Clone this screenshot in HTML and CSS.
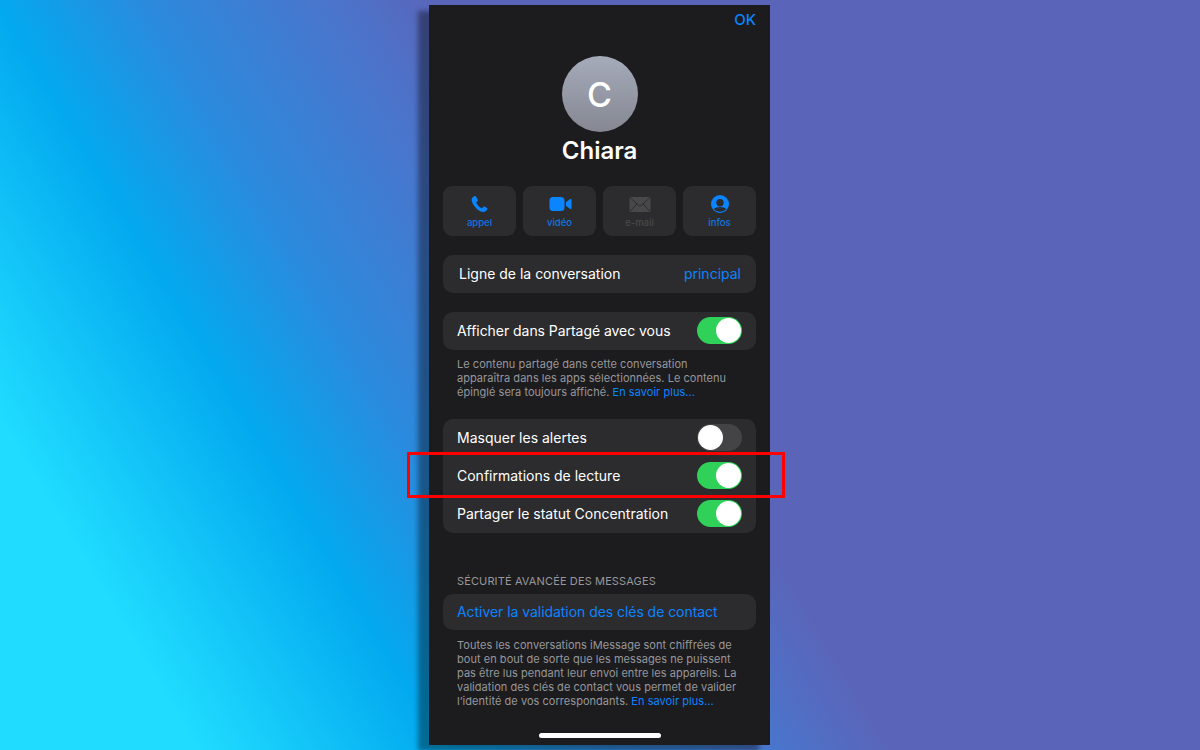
FILE: index.html
```html
<!DOCTYPE html>
<html lang="fr">
<head>
    <meta charset="UTF-8">
    <meta name="viewport" content="width=device-width, initial-scale=1.0">
    <title>Chiara</title>
    <link rel="stylesheet" href="styles.css">
</head>
<body>
    <main class="phone">
        <div class="top-bar"><span class="ok">OK</span></div>

        <section class="contact">
            <div class="avatar">C</div>
            <h1 class="contact-name">Chiara</h1>
        </section>

        <div class="actions">
            <div class="action">
                <svg class="action-icon" viewBox="0 0 24 20" width="24" height="20">
                    <path fill="#0a84ff" transform="translate(3.5 1)" d="M2.6.3C3.300-.1 4.100 0 4.600.7L6.200 3.400C6.600 4 6.500 4.700 6 5.200L5.100 6C4.800 6.300 4.800 6.600 4.900 6.900 5.400 8 6.100 9 7 10 8 10.900 9 11.600 10 12.100 10.300 12.200 10.600 12.200 10.900 11.900L11.700 11C12.200 10.500 12.900 10.400 13.500 10.800L15.200 11.800C15.900 12.300 16.100 13.100 15.600 13.800 14.800 15 13.600 16 12.200 16 9.500 15.900 6.800 14.300 4.500 11.900 2 9.400.4 6.500.1 3.900 0 2.500 1.300 1.100 2.600.3Z"/>
                </svg>
                <span class="action-label">appel</span>
            </div>
            <div class="action">
                <svg class="action-icon" viewBox="0 0 24 20" width="24" height="20">
                    <rect fill="#0a84ff" x="1.500" y="2" width="15" height="14" rx="3.500"/>
                    <path fill="#0a84ff" d="M18 7.300L21.800 4.200C22.500 3.700 23.500 4.100 23.500 5V13C23.500 13.900 22.500 14.300 21.800 13.800L18 10.700Z"/>
                </svg>
                <span class="action-label">vidéo</span>
            </div>
            <div class="action action-off">
                <svg class="action-icon" viewBox="0 0 24 20" width="24" height="20">
                    <rect fill="#48484a" x="1.500" y="2" width="21" height="15" rx="1.500"/>
                    <path fill="none" stroke="#2c2c2e" stroke-width="1" d="M2 2.500L10.300 10C11.300 10.900 12.700 10.900 13.700 10L22 2.500M2 16.500L9.200 8.500M22 16.500L14.800 8.500"/>
                </svg>
                <span class="action-label">e-mail</span>
            </div>
            <div class="action">
                <svg class="action-icon" viewBox="0 0 24 20" width="24" height="20">
                    <circle fill="#0a84ff" cx="12" cy="9" r="9"/>
                    <circle fill="#2c2c2e" cx="12" cy="7.800" r="3.700"/>
                    <path fill="#2c2c2e" d="M5.800 14C7 12.700 9.200 12 12 12S17 12.700 18.200 14C16.700 15.800 14.500 16.800 12 16.800S7.300 15.800 5.800 14Z"/>
                </svg>
                <span class="action-label">infos</span>
            </div>
        </div>

        <div class="card card-line">
            <span>Ligne de la conversation</span>
            <span class="link">principal</span>
        </div>

        <div class="card card-shared">
            <div class="row">
                <span class="tight">Afficher dans Partagé avec vous</span>
                <span class="switch on"></span>
            </div>
        </div>
        <p class="note note-shared">Le contenu partagé dans cette conversation<br>apparaîtra dans les apps sélectionnées. Le contenu<br>épinglé sera toujours affiché. <span class="link">En savoir plus...</span></p>

        <div class="card card-options">
            <div class="row">
                <span>Masquer les alertes</span>
                <span class="switch"></span>
            </div>
            <div class="row">
                <span>Confirmations de lecture</span>
                <span class="switch on"></span>
            </div>
            <div class="row">
                <span>Partager le statut Concentration</span>
                <span class="switch on"></span>
            </div>
        </div>

        <h2 class="section-title">SÉCURITÉ AVANCÉE DES MESSAGES</h2>
        <div class="card">
            <div class="row row-link link tight">Activer la validation des clés de contact</div>
        </div>
        <p class="note note-security">Toutes les conversations iMessage sont chiffrées de<br>bout en bout de sorte que les messages ne puissent<br>pas être lus pendant leur envoi entre les appareils. La<br>validation des clés de contact vous permet de valider<br>l’identité de vos correspondants. <span class="link">En savoir plus...</span></p>

        <div class="home-bar"></div>
    </main>

    <div class="highlight"></div>
</body>
</html>
```

FILE: styles.css
```css
* {
    box-sizing: border-box;
}
html, body {
    height: 100%;
}
body {
    margin: 0;
    overflow: hidden;
    display: flex;
    justify-content: center;
    align-items: flex-start;
    padding: 5px 1px 0 0;
    font-family: Inter, "Liberation Sans", sans-serif;
    background: linear-gradient(59deg, #20dcff 12%, #03a9ef 27%, #2b8add 36%, #4a75cc 47%, #5a65b9 54%);
}
.phone {
    width: 341px;
    height: 740px;
    padding: 0 14px;
    background: #1c1c1e;
    color: #fff;
    box-shadow: -11px 6px 5px rgba(0, 0, 0, 0.38);
    display: flex;
    flex-direction: column;
    position: relative;
}
.top-bar {
    display: flex;
    justify-content: flex-end;
    height: 30px;
    padding-top: 6px;
}
.ok {
    color: #0a84ff;
    font-size: 15px;
    font-weight: 500;
    line-height: 18px;
}
.contact {
    display: flex;
    flex-direction: column;
    align-items: center;
    padding-top: 21px;
}
.avatar {
    width: 76px;
    height: 76px;
    border-radius: 50%;
    background: linear-gradient(#a6abba, #858892);
    font-size: 34px;
    font-weight: 500;
    display: flex;
    align-items: center;
    justify-content: center;
}
.contact-name {
    margin: 4px 0 0;
    font-size: 24px;
    line-height: 30px;
    font-weight: 600;
    letter-spacing: -0.03px;
}
.actions {
    display: grid;
    grid-template-columns: repeat(4, 73px);
    justify-content: space-between;
    margin-top: 20px;
}
.action {
    height: 50px;
    border-radius: 9px;
    background: #2c2c2e;
    display: flex;
    flex-direction: column;
    align-items: center;
    padding-top: 9px;
}
.action-label {
    color: #0a84ff;
    opacity: 0.85;
    font-size: 9.5px;
    font-weight: 500;
    line-height: 12px;
    margin-top: 2px;
}
.action-off .action-label {
    color: #48484a;
    opacity: 1;
}
.card {
    background: #2c2c2e;
    border-radius: 10px;
    font-size: 14px;
}
.card-line {
    height: 38px;
    margin-top: 19px;
    padding: 0 15px 1px 16px;
    display: flex;
    justify-content: space-between;
    align-items: center;
}
.card-shared {
    margin-top: 19px;
}
.card-options {
    margin-top: 20px;
}
.row {
    height: 38px;
    padding: 0 14px 1px;
    display: flex;
    justify-content: space-between;
    align-items: center;
}
.row-link {
    height: 36px;
}
.tight {
    letter-spacing: -0.05px;
}
.link {
    color: #0a84ff;
}
.switch {
    width: 45px;
    height: 27px;
    border-radius: 14px;
    background: #444447;
    position: relative;
    flex-shrink: 0;
}
.switch::after {
    content: "";
    position: absolute;
    top: 1px;
    left: 1px;
    width: 25px;
    height: 25px;
    border-radius: 50%;
    background: #fff;
}
.switch.on {
    background: #30d158;
}
.switch.on::after {
    left: 19px;
}
.note {
    margin: 0;
    padding: 0 14px;
    color: #97979c;
    font-size: 11px;
    line-height: 14px;
    letter-spacing: 0.04px;
}
.note-shared {
    margin-top: 7px;
}
.note-security {
    margin-top: 8px;
}
.section-title {
    margin: 41px 0 6px;
    padding: 0 14px;
    color: #97979c;
    font-size: 11px;
    line-height: 14px;
    font-weight: 400;
    letter-spacing: 0.13px;
}
.home-bar {
    position: absolute;
    left: 110px;
    bottom: 7px;
    width: 122px;
    height: 5px;
    border-radius: 3px;
    background: #fff;
}
.highlight {
    position: absolute;
    left: 407px;
    top: 452px;
    width: 378px;
    height: 46px;
    border: 3px solid #ff0000;
}
```
